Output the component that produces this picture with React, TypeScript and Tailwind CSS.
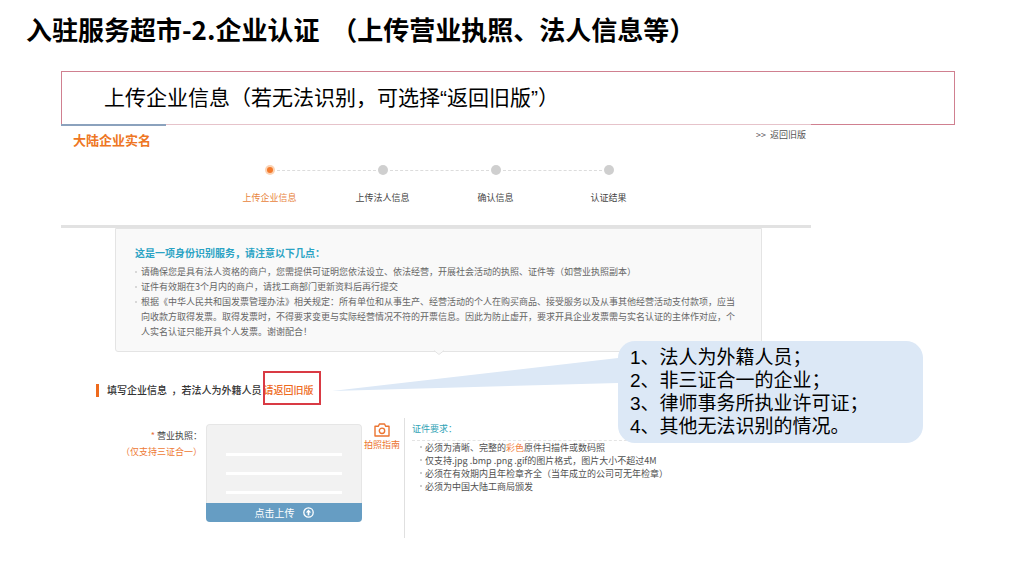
const steps = [
  { label: "上传企业信息", active: true },
  { label: "上传法人信息" },
  { label: "确认信息" },
  { label: "认证结果" },
];

const notices = [
  "请确保您是具有法人资格的商户，您需提供可证明您依法设立、依法经营，开展社会活动的执照、证件等（如营业执照副本）",
  "证件有效期在3个月内的商户，请找工商部门更新资料后再行提交",
  "根据《中华人民共和国发票管理办法》相关规定：所有单位和从事生产、经营活动的个人在购买商品、接受服务以及从事其他经营活动支付款项，应当向收款方取得发票。取得发票时，不得要求变更与实际经营情况不符的开票信息。因此为防止虚开，要求开具企业发票需与实名认证的主体作对应，个人实名认证只能开具个人发票。谢谢配合！",
];

const legacyCases = [
  "1、法人为外籍人员；",
  "2、非三证合一的企业；",
  "3、律师事务所执业许可证；",
  "4、其他无法识别的情况。",
];

function CameraIcon() {
  return (
    <svg width="16" height="14" viewBox="0 0 16 14" fill="none" stroke="currentColor" strokeWidth="1.4" strokeLinejoin="round">
      <path d="M1 3.2h3.4L5.4 1h5.2l1 2.2H15V13H1Z" />
      <circle cx="8" cy="7.8" r="2.7" />
    </svg>
  );
}

function UploadIcon() {
  return (
    <svg width="11" height="11" viewBox="0 0 11 11" fill="none" stroke="currentColor">
      <circle cx="5.5" cy="5.5" r="4.7" strokeWidth="1.3" />
      <path d="M5.5 8.4V4" strokeWidth="1.7" />
      <path d="M2.8 5.6 5.5 2.4 8.2 5.6Z" fill="currentColor" stroke="none" />
    </svg>
  );
}

function Steps() {
  return (
    <ol className="mt-[15px] flex justify-center pl-5 pr-[14px]">
      {steps.map(({ label, active }, i) => (
        <li key={label} className="relative flex w-[113px] flex-col items-center gap-[17px]">
          {i < steps.length - 1 && (
            <span className="absolute left-[64px] top-[5px] w-[99px] border-t border-dashed border-[#dcdcdc]" />
          )}
          {active ? (
            <span className="flex size-[10px] items-center justify-center rounded-full bg-[#fbd3b4]">
              <span className="size-[6px] rounded-full bg-[#f47a2c]" />
            </span>
          ) : (
            <span className="size-[10px] rounded-full bg-[#cfcfcf]" />
          )}
          <span className={`text-[9px] leading-[12px] ${active ? "text-[#e8843c]" : "text-[#444444]"}`}>{label}</span>
        </li>
      ))}
    </ol>
  );
}

function NoticePanel() {
  return (
    <div className="relative ml-[54px] mr-[49px] rounded-b-[3px] border border-[#e4e4e4] bg-[#f9f9f9] pb-3 pl-[19px] pr-[26px] pt-4">
      <h3 className="text-[10px] font-bold leading-4 text-[#2ba3c4]">这是一项身份识别服务，请注意以下几点：</h3>
      <ul className="mt-[3px] text-[9px] leading-[15px] text-[#666666]">
        {notices.map((text) => (
          <li key={text} className="flex gap-[4px]">
            <span className="mt-[7px] size-[2px] shrink-0 rounded-full bg-[#cccccc]" />
            {text}
          </li>
        ))}
      </ul>
      <svg className="absolute -bottom-[5px] left-1/2 -translate-x-1/2" width="10" height="6" viewBox="0 0 10 6">
        <path d="M0 0.5 L5 4.5 L10 0.5" fill="#f9f9f9" stroke="#e4e4e4" />
      </svg>
    </div>
  );
}

function Requirement({ children }: { children: React.ReactNode }) {
  return (
    <li className="flex gap-[3px]">
      <span className="mt-[5px] size-[2px] shrink-0 rounded-full bg-[#bbbbbb]" />
      <span>{children}</span>
    </li>
  );
}

function LicenseForm() {
  return (
    <div className="mt-5 flex text-[9px]">
      <label htmlFor="license" className="w-[141px] pt-[10px] text-right leading-4 text-[#444444]">
        <span className="text-[#e8703c]">*</span> 营业执照：
        <span className="block text-[#ee7a35]">（仅支持三证合一）</span>
      </label>

      <div className="ml-1 mt-[6px] w-[156px] self-start overflow-hidden rounded-[4px] bg-[#f2f2f2]">
        <div className="flex h-[79px] flex-col gap-4 rounded-t-[4px] border border-b-0 border-[#e6e6e6] px-[19px] pt-[28px]">
          <span className="h-[3px] bg-white" />
          <span className="h-[3px] bg-white" />
          <span className="h-[3px] bg-white" />
        </div>
        <button
          id="license"
          type="button"
          className="flex h-[19px] w-full items-center justify-center gap-2 bg-[#669dc3] text-[10px] leading-[19px] text-white"
        >
          点击上传
          <UploadIcon />
        </button>
      </div>

      <a href="#guide" className="ml-[2px] mt-[5px] flex w-9 flex-col items-center gap-[2px] self-start text-[#ec7430]">
        <CameraIcon />
        <span className="whitespace-nowrap leading-[12px]">拍照指南</span>
      </a>

      <div className="ml-1 h-[120px] flex-1 border-l border-[#e0e0e0] pl-[7px] pt-[3px]">
        <h3 className="w-[220px] border-b border-dashed border-[#e4e4e4] pb-[3px] leading-4 text-[#2fa3b5]">
          证件要求：
        </h3>
        <ul className="ml-[8px] leading-[13px] text-[#505050]">
          <Requirement>
            必须为清晰、完整的<span className="text-[#f08040]">彩色</span>原件扫描件或数码照
          </Requirement>
          <Requirement>仅支持.jpg .bmp .png .gif的图片格式，图片大小不超过4M</Requirement>
          <Requirement>必须在有效期内且年检章齐全（当年成立的公司可无年检章）</Requirement>
          <Requirement>必须为中国大陆工商局颁发</Requirement>
        </ul>
      </div>
    </div>
  );
}

function Callout() {
  return (
    <div className="absolute left-[557px] top-[217px] w-[305px] rounded-[17px] bg-[#dce8f6] py-[5px] pl-3 font-['Liberation_Sans','Noto_Sans_CJK_SC',sans-serif] text-[19px] leading-[23px] text-black">
      <svg className="absolute right-full top-[17px]" width="286" height="34" viewBox="0 0 286 34">
        <path d="M0 33 L286 0 V25 Z" fill="#dce8f6" />
      </svg>
      {legacyCases.map((text) => (
        <p key={text}>{text}</p>
      ))}
    </div>
  );
}

export default function App() {
  return (
    <div className="min-h-screen overflow-x-hidden bg-white font-['Noto_Sans_CJK_SC',sans-serif] text-black">
      <h1 className="whitespace-pre pl-[26px] pt-[10px] text-[26px] font-bold leading-[38px]">
        {"入驻服务超市-2.企业认证  （上传营业执照、法人信息等）"}
      </h1>

      <div className="ml-[61px] mr-[69px] mt-[23px] border border-[#d08090] pl-[42px] font-['Liberation_Sans','Noto_Sans_CJK_SC',sans-serif] text-[21px] leading-[52px]">
        上传企业信息（若无法识别，可选择“返回旧版”）
      </div>

      <main className="relative -mt-px ml-[61px] max-w-[750px]">
        <div className="absolute inset-x-0 top-0 h-px bg-[#e6c3ca]">
          <div className="h-[2px] w-[105px] bg-[#8ba2bd]" />
        </div>
        <header className="flex items-start justify-between pl-3 pr-[5px] pt-[5px]">
          <h2 className="mt-[2px] text-[13px] font-bold leading-[18px] text-[#ee7623]">大陆企业实名</h2>
          <a href="#legacy" className="text-[9px] leading-[12px] text-[#555555]">&gt;&gt;&nbsp; 返回旧版</a>
        </header>

        <div className="pt-px">
          <Steps />
        </div>
        <div className="mt-[21px] h-[3px] bg-[#e2e2e2]" />
        <NoticePanel />

        <div className="mt-[30px] flex items-center gap-2 pl-[35px] text-[10px] font-medium leading-4 text-[#333333]">
          <span className="h-[13px] w-[3px] bg-[#ee6a1c]" />
          <p>
            填写企业信息&nbsp; ，若法人为外籍人员
            <a href="#legacy" className="relative ml-[2px] text-[#ee6a1c]">
              请返回旧版
              <span className="absolute -bottom-[8px] -left-px -right-[7px] -top-[11px] border-2 border-[#d93a44]" />
            </a>
          </p>
        </div>

        <LicenseForm />
        <Callout />
      </main>
    </div>
  );
}
